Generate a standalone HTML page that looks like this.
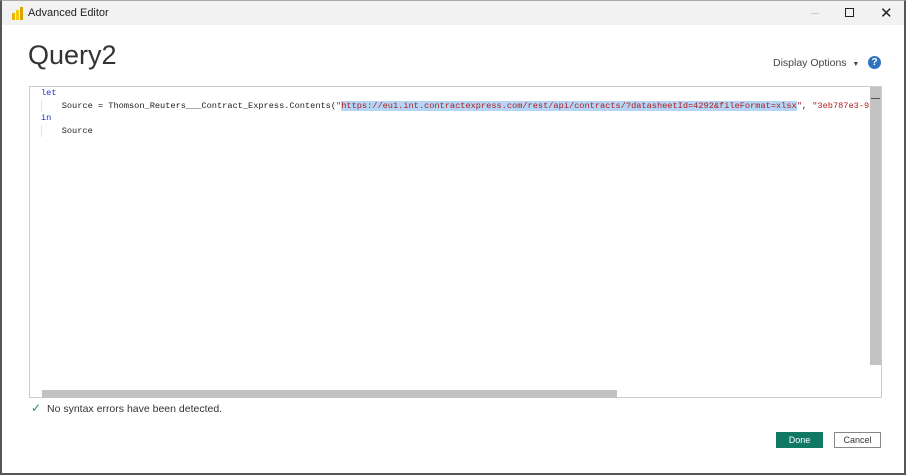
<!DOCTYPE html>
<html><head><style>
body{margin:0;width:906px;height:475px;background:#fff;position:relative;overflow:hidden;font-family:"Liberation Sans",sans-serif}
.abs{position:absolute}
.code{font-family:"Liberation Mono",monospace;font-size:8.65px;white-space:pre;color:#222;line-height:12.7px}
.kw{color:#1a2fd8}.str{color:#b21b1b}.hl{background:#b4d5f5}
</style></head><body>
<div class="abs" style="left:0;top:0;width:906px;height:475px;border-left:2px solid #555;border-right:2px solid #555;border-top:1px solid #aaa;border-bottom:2px solid #555;box-sizing:border-box"></div>
<div class="abs" style="left:2px;top:1px;width:902px;height:24px;background:#f3f2f2"></div>
<svg class="abs" style="left:12px;top:7px" width="11" height="13"><rect x="0" y="6" width="3" height="7" fill="#e8b400"/><rect x="4" y="3" width="3" height="10" fill="#f2c811"/><rect x="8" y="0" width="3" height="13" fill="#d9a300"/></svg>
<div class="abs" style="left:28px;top:7px;font-size:11px;color:#222">Advanced Editor</div>
<div class="abs" style="left:811px;top:13px;width:8px;height:1px;background:#ccc"></div>
<div class="abs" style="left:845px;top:8px;width:7px;height:7px;border:1.3px solid #222"></div>
<div class="abs" style="left:880px;top:4px;font-size:15px;color:#222">✕</div>
<div class="abs" style="left:28px;top:40px;font-size:27px;color:#333;font-weight:300">Query2</div>
<div class="abs" style="left:773px;top:57px;font-size:10.5px;color:#444">Display Options &nbsp;<span style="font-size:7px">▼</span></div>
<div class="abs" style="left:868px;top:56px;width:13px;height:13px;border-radius:50%;background:#2e73c0;color:#fff;font-size:10px;font-weight:bold;text-align:center;line-height:13px">?</div>
<div class="abs" style="left:29px;top:86px;width:853px;height:312px;border:1px solid #ccc;box-sizing:border-box"></div>
<div class="abs" style="left:870px;top:87px;width:11px;height:278px;background:#c2c2c2"></div>
<div class="abs" style="left:871px;top:98px;width:9px;height:1px;background:#555"></div>
<div class="abs" style="left:42px;top:390px;width:575px;height:8px;background:#c2c2c2"></div>
<div class="abs" style="left:41px;top:100px;width:1px;height:12px;background:#e4e4e4"></div>
<div class="abs" style="left:41px;top:125px;width:1px;height:12px;background:#e4e4e4"></div>
<div class="abs code" style="left:41px;top:87px;width:829px;overflow:hidden"><span class="kw">let</span>
    Source = Thomson_Reuters___Contract_Express.Contents(<span class="str">"<span class="hl">https://eu1.int.contractexpress.com/rest/api/contracts/?datasheetId=4292&amp;fileFormat=xlsx</span>"</span>, <span class="str">"3eb787e3-925</span>
<span class="kw">in</span>
    Source</div>
<div class="abs" style="left:31px;top:401px;color:#2e8b6b;font-size:12px">✓</div>
<div class="abs" style="left:47px;top:403px;font-size:10.5px;color:#333">No syntax errors have been detected.</div>
<div class="abs" style="left:776px;top:432px;width:47px;height:16px;background:#117865;color:#fff;font-size:9px;text-align:center;line-height:16px">Done</div>
<div class="abs" style="left:834px;top:432px;width:47px;height:16px;border:1px solid #888;box-sizing:border-box;color:#333;font-size:9px;text-align:center;line-height:14px">Cancel</div>
</body></html>
